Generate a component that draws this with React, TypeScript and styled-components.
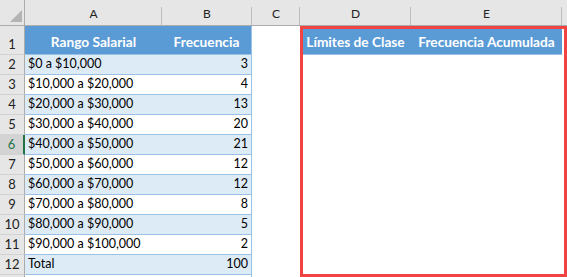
import styled, { createGlobalStyle } from "styled-components";

const GlobalStyle = createGlobalStyle`
  body {
    margin: 0;
    background: #fff;
  }
  * {
    box-sizing: border-box;
  }
`;

const Sheet = styled.div`
  position: relative;
  width: 567px;
  height: 277px;
  overflow: hidden;
  display: grid;
  grid-template-columns: 25px 137px 90px 48px 111px 151px 5px;
  grid-template-rows: 26px 29px repeat(11, 20px) 2px;
  font-family: Lato, "Liberation Sans", sans-serif;
  font-size: 12.5px;
  color: #000;
  background: #fff;
`;

const Corner = styled.div`
  position: relative;
  background: #e6e6e6;
  border-right: 1px solid #ababab;
  border-bottom: 1px solid #ababab;

  &::after {
    content: "";
    position: absolute;
    left: 10px;
    top: 10px;
    width: 12px;
    height: 12px;
    background: #b4b4b4;
    clip-path: polygon(100% 0, 100% 100%, 0 100%);
  }
`;

const ColHeader = styled.div<{ $last?: boolean }>`
  position: relative;
  display: flex;
  align-items: flex-end;
  justify-content: center;
  padding-bottom: 4px;
  background: #e6e6e6;
  border-bottom: 1px solid #ababab;
  color: #222;
  font-size: 12px;

  &::after {
    content: "";
    display: ${(p) => (p.$last ? "none" : "block")};
    position: absolute;
    right: 0;
    top: 7px;
    bottom: 0;
    width: 1px;
    background: #bdbdbd;
  }
`;

const RowHeader = styled.div<{ $active?: boolean }>`
  display: flex;
  align-items: flex-end;
  justify-content: center;
  padding-bottom: 2px;
  background: ${(p) => (p.$active ? "#d3d3d3" : "#e6e6e6")};
  color: ${(p) => (p.$active ? "#217346" : "#222")};
  border-right: ${(p) => (p.$active ? "2px solid #217346" : "1px solid #ababab")};
  border-bottom: 1px solid #d2d2d2;
  font-size: 13px;
`;

const HeadCell = styled.div<{ $edge?: boolean }>`
  display: flex;
  align-items: center;
  justify-content: center;
  padding-top: 2px;
  background: #5b9bd5;
  color: #fff;
  font-size: 13.7px;
  font-weight: 700;
  white-space: nowrap;
  border-bottom: 1px solid #9bc2e6;
  border-right: ${(p) => (p.$edge ? "1px solid #9bc2e6" : "none")};
`;

const DataCell = styled.div<{ $band: boolean; $num?: boolean }>`
  display: flex;
  align-items: flex-end;
  justify-content: ${(p) => (p.$num ? "flex-end" : "flex-start")};
  padding: 0 3px 3px;
  background: ${(p) => (p.$band ? "#ddebf7" : "#fff")};
  border-bottom: 1px solid #9bc2e6;
  border-right: ${(p) => (p.$num ? "1px solid #9bc2e6" : "none")};
  white-space: nowrap;
`;

const Blank = styled.div`
  background: #fff;
`;

const Highlight = styled.div`
  position: absolute;
  left: 300px;
  top: 26px;
  width: 267px;
  height: 251px;
  border: 3px solid #f24343;
  pointer-events: none;
`;

const rows: [string, string][] = [
  ["$0 a $10,000", "3"],
  ["$10,000 a $20,000", "4"],
  ["$20,000 a $30,000", "13"],
  ["$30,000 a $40,000", "20"],
  ["$40,000 a $50,000", "21"],
  ["$50,000 a $60,000", "12"],
  ["$60,000 a $70,000", "12"],
  ["$70,000 a $80,000", "8"],
  ["$80,000 a $90,000", "5"],
  ["$90,000 a $100,000", "2"],
  ["Total", "100"],
];

const letters = ["A", "B", "C", "D", "E"];

export default function App() {
  return (
    <>
      <GlobalStyle />
      <Sheet>
        <Corner />
        {letters.map((l) => (
          <ColHeader key={l}>{l}</ColHeader>
        ))}
        <ColHeader $last />

        <RowHeader>1</RowHeader>
        <HeadCell>Rango Salarial</HeadCell>
        <HeadCell $edge>Frecuencia</HeadCell>
        <Blank />
        <HeadCell>Límites de Clase</HeadCell>
        <HeadCell>Frecuencia Acumulada</HeadCell>
        <Blank />

        {rows.map(([range, freq], i) => {
          const n = i + 2;
          const band = n % 2 === 0;
          return [
            <RowHeader key={`h${n}`} $active={n === 6}>
              {n}
            </RowHeader>,
            <DataCell key={`a${n}`} $band={band}>
              {range}
            </DataCell>,
            <DataCell key={`b${n}`} $band={band} $num>
              {freq}
            </DataCell>,
            <Blank key={`c${n}`} />,
            <Blank key={`d${n}`} />,
            <Blank key={`e${n}`} />,
            <Blank key={`f${n}`} />,
          ];
        })}

        <RowHeader />
        <DataCell $band={false} />
        <DataCell $band={false} $num />
        <Blank />
        <Blank />
        <Blank />
        <Blank />

        <Highlight />
      </Sheet>
    </>
  );
}
